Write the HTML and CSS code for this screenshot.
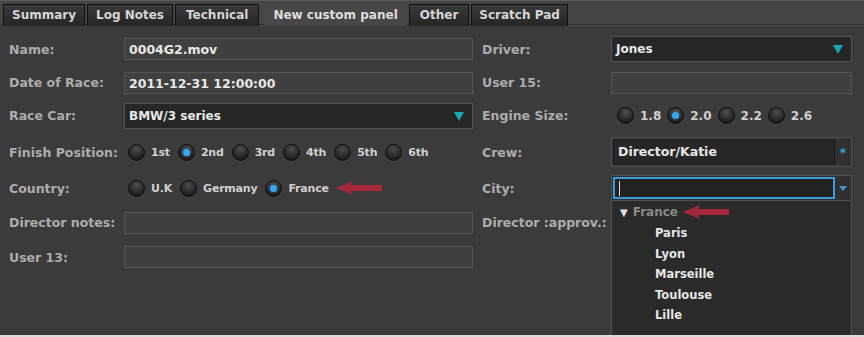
FILE: index.html
```html
<!DOCTYPE html>
<html lang="en">
<head>
  <meta charset="UTF-8" />
  <title>New custom panel</title>
  <link rel="stylesheet" href="styles.css">
</head>
<body>
  <div class="tabbar">
    <div class="tab">Summary</div>
    <div class="tab">Log Notes</div>
    <div class="tab">Technical</div>
    <div class="tab active">New custom panel</div>
    <div class="tab">Other</div>
    <div class="tab">Scratch Pad</div>
  </div>

  <div class="panel">
    <div class="form">
      <label>Name:</label>
      <div class="field text">0004G2.mov</div>
      <label class="rlabel">Driver:</label>
      <div class="field select">Jones<span class="tri"></span></div>

      <label>Date of Race:</label>
      <div class="field text">2011-12-31 12:00:00</div>
      <label class="rlabel">User 15:</label>
      <div class="field text short"></div>

      <label>Race Car:</label>
      <div class="field select">BMW/3 series<span class="tri"></span></div>
      <label class="rlabel">Engine Size:</label>
      <div class="radios engine">
        <span class="radio"></span><span>1.8</span>
        <span class="radio on"></span><span>2.0</span>
        <span class="radio"></span><span>2.2</span>
        <span class="radio"></span><span>2.6</span>
      </div>

      <label>Finish Position:</label>
      <div class="radios">
        <span class="radio"></span><span>1st</span>
        <span class="radio on"></span><span>2nd</span>
        <span class="radio"></span><span>3rd</span>
        <span class="radio"></span><span>4th</span>
        <span class="radio"></span><span>5th</span>
        <span class="radio"></span><span>6th</span>
      </div>
      <label class="rlabel">Crew:</label>
      <div class="combo">
        <div class="combo-input">Director/Katie</div>
        <div class="combo-btn star">*</div>
      </div>

      <label>Country:</label>
      <div class="radios">
        <span class="radio"></span><span>U.K</span>
        <span class="radio"></span><span>Germany</span>
        <span class="radio on"></span><span>France</span>
        <svg class="arrow" width="46" height="16" viewBox="0 0 46 16"><path d="M0 8 L17 1 L15 5 L46 5 L46 11 L15 11 L17 15 Z" fill="#a3283b"/></svg>
      </div>
      <label class="rlabel">City:</label>
      <div class="combo city">
        <div class="combo-input focus"><span class="caret"></span></div>
        <div class="combo-btn"><span class="mini-tri"></span></div>
        <div class="popup">
          <div class="group"><span class="open">&#9660;</span>France
            <svg class="arrow" width="46" height="16" viewBox="0 0 46 16"><path d="M0 8 L17 1 L15 5 L46 5 L46 11 L15 11 L17 15 Z" fill="#a3283b"/></svg>
          </div>
          <div class="item">Paris</div>
          <div class="item">Lyon</div>
          <div class="item">Marseille</div>
          <div class="item">Toulouse</div>
          <div class="item">Lille</div>
        </div>
      </div>

      <label>Director notes:</label>
      <div class="field text short"></div>
      <label class="rlabel">Director :approv.:</label>
      <div></div>

      <label>User 13:</label>
      <div class="field text short"></div>
      <div></div>
      <div></div>
    </div>
  </div>
</body>
</html>
```

FILE: styles.css
```css
body {
  margin: 0;
  width: 864px;
  height: 337px;
  overflow: hidden;
  background: #3b3b3b;
  font-family: 'DejaVu Sans', 'Liberation Sans', sans-serif;
  font-size: 12.5px;
  font-weight: bold;
  color: #adadad;
  border-bottom: 2px solid #dcdcdc;
  box-sizing: border-box;
}
.tabbar {
  display: flex;
  gap: 2px;
  height: 25px;
  padding: 3px 0 0 3px;
  box-sizing: border-box;
  background: #454545;
  border-top: 1px solid #5a5a5a;
  border-bottom: 1px solid #2c2c2c;
  box-shadow: 0 1px 0 #4a4a4a;
}
.tab {
  height: 22px;
  line-height: 21px;
  padding: 0 8px;
  box-sizing: border-box;
  border: 1px solid #111;
  border-bottom: none;
  background: linear-gradient(#3a3a3a, #252525);
  color: #d6d6d6;
  font-size: 12px;
}
.tab:nth-child(3),
.tab:nth-child(5) {
  padding: 0 10px;
}
.tab:nth-child(6) {
  padding: 0 7px;
}
.tab.active {
  border-color: transparent;
  background: #474747;
  margin: 0 0 0 3px;
  color: #dedede;
}
.panel {
  padding: 7px 0 0 9px;
}
.form {
  display: grid;
  grid-template-columns: 115px 349px 138px 241px;
  grid-template-rows: 34px 33px 33px 40px 32px 37px 32px;
  align-items: center;
}
.rlabel {
  padding-left: 9px;
}
.field {
  height: 22px;
  line-height: 21px;
  padding: 0 4px;
  box-sizing: border-box;
  border: 1px solid #555;
  color: #e8e8e8;
}
.field.text {
  background: #404040;
}
.field.select {
  height: 26px;
  line-height: 24px;
  background: #262626;
  position: relative;
  font-size: 12px;
}
.tri {
  position: absolute;
  right: 8px;
  top: 8px;
  border-left: 5px solid transparent;
  border-right: 5px solid transparent;
  border-top: 9px solid #19a6b3;
}
.radios {
  display: flex;
  align-items: center;
  padding-left: 4px;
  color: #d0d0d0;
  font-size: 11px;
  letter-spacing: -0.2px;
}
.engine {
  padding-left: 6px;
  font-size: 12px;
  letter-spacing: 0;
}
.radios span:not(.radio) {
  margin: 0 8px 0 6px;
}
.engine span:not(.radio) {
  margin: 0 6px 0 6px;
}
.radio {
  width: 17px;
  height: 17px;
  box-sizing: border-box;
  border-radius: 50%;
  border: 1px solid #0c0c0c;
  background: radial-gradient(circle at 50% 30%, #4d4d4d, #1c1c1c 75%);
  box-shadow: 0 1px 0 rgba(255,255,255,0.08);
  position: relative;
}
.radio.on::after {
  content: '';
  position: absolute;
  left: 4px;
  top: 4px;
  width: 7px;
  height: 7px;
  border-radius: 50%;
  background: #3aa6ec;
  box-shadow: 0 0 2px #2a86c8;
}
.arrow {
  margin-left: -1px;
}
.combo {
  display: flex;
  height: 30px;
  padding: 2px 0 2px 1px;
  box-sizing: border-box;
  border: 1px solid #505050;
  background: #303030;
  position: relative;
}
.combo-input {
  flex: 1;
  background: #262626;
  border: 1px solid #1a1a1a;
  color: #e8e8e8;
  line-height: 22px;
  padding: 0 4px;
}
.combo-btn {
  width: 16px;
  display: flex;
  align-items: center;
  justify-content: center;
}
.star {
  color: #3a9ad9;
  font-size: 13px;
}
.city {
  height: 26px;
  padding: 1px 0 1px 1px;
}
.combo-input.focus {
  border: 2px solid #3b9bd8;
  background: #222;
}
.caret {
  display: inline-block;
  width: 1px;
  height: 15px;
  margin-top: 2px;
  background: #ddd;
  vertical-align: top;
}
.mini-tri {
  border-left: 4px solid transparent;
  border-right: 4px solid transparent;
  border-top: 5px solid #3b9bd8;
}
.popup {
  position: absolute;
  left: -1px;
  right: -1px;
  top: 25px;
  height: 140px;
  background: #2a2a2a;
  border: 1px solid #505050;
  border-top: none;
  padding-top: 2px;
  box-sizing: border-box;
}
.group {
  display: flex;
  align-items: center;
  height: 18px;
  margin-bottom: 2px;
  padding-left: 8px;
  color: #8a8a8a;
  font-size: 12px;
}
.group .arrow {
  margin-left: 5px;
}
.open {
  color: #e0e0e0;
  font-size: 10px;
  margin-right: 5px;
}
.item {
  height: 20.5px;
  line-height: 20px;
  padding-left: 43px;
  color: #e6e6e6;
  font-size: 11.5px;
}
```
